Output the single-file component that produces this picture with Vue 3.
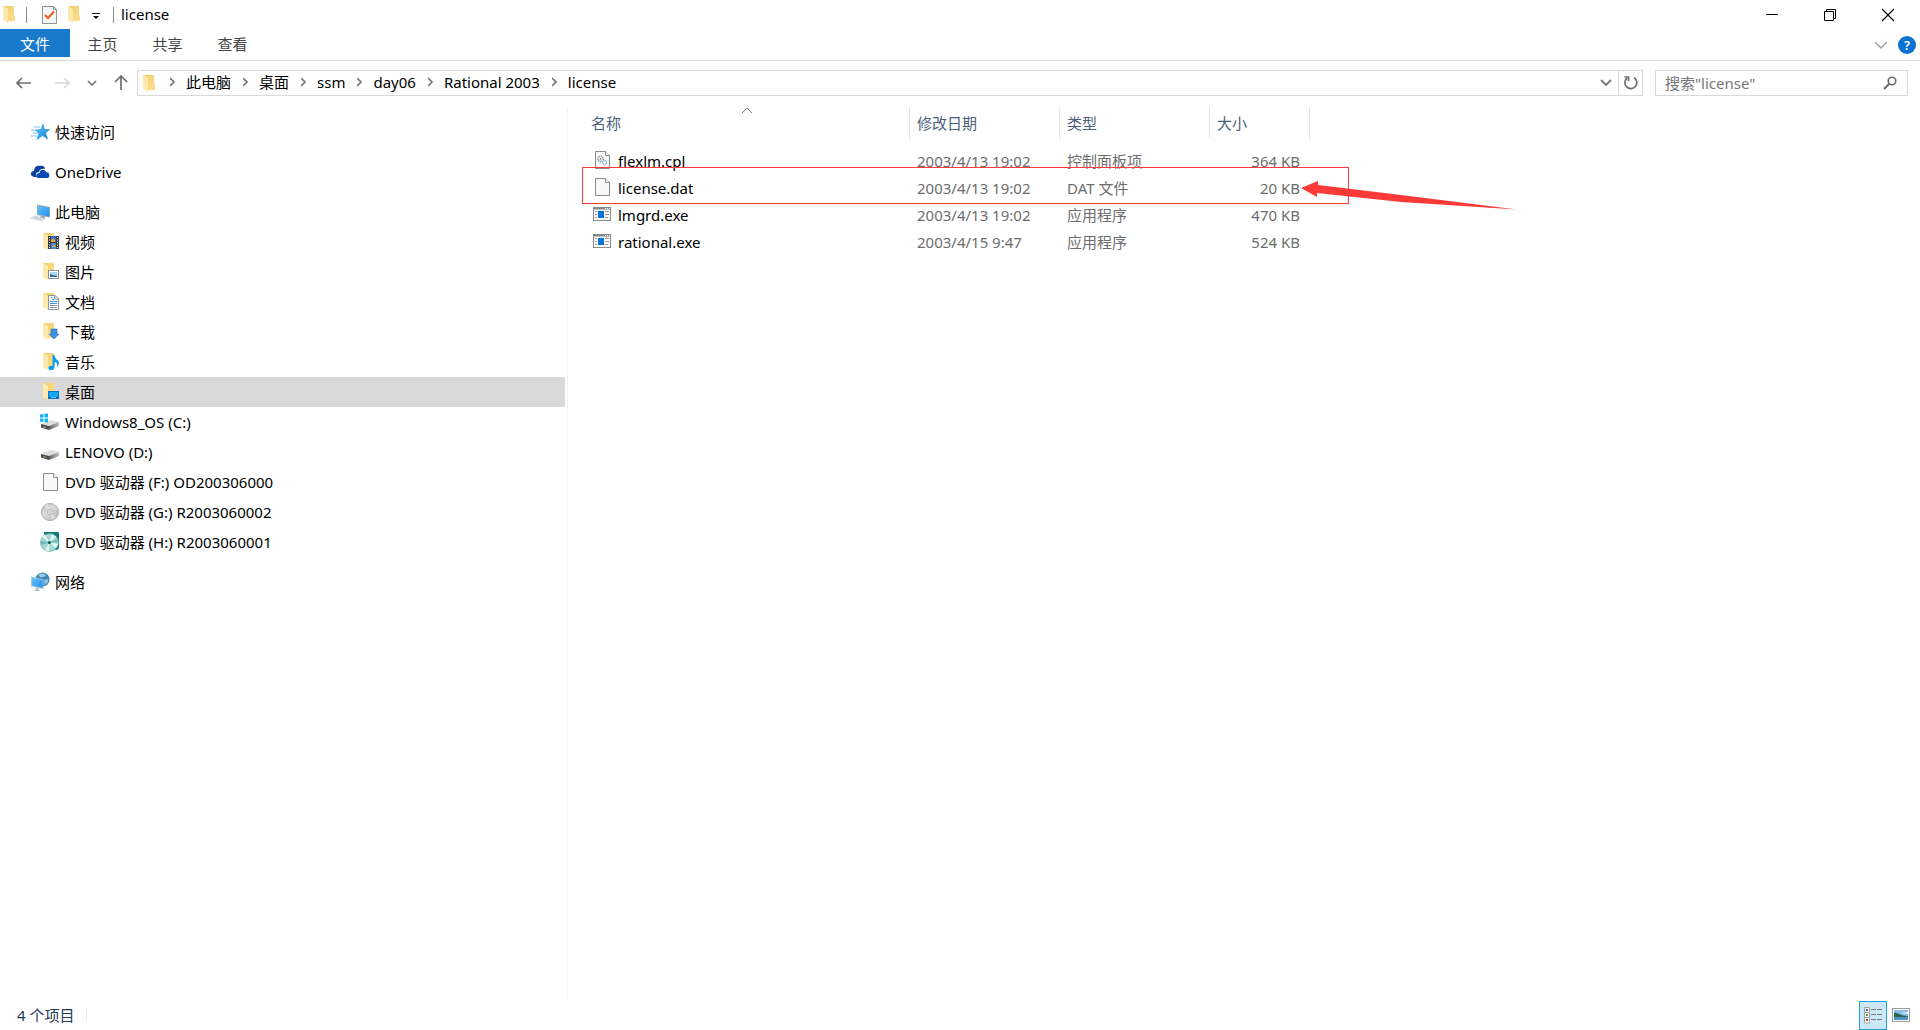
<script setup>
const tabs = ['主页', '共享', '查看']
const crumbs = ['此电脑', '桌面', 'ssm', 'day06', 'Rational 2003', 'license']

const groups = [
  { label: '快速访问', icon: 'star', children: [] },
  { label: 'OneDrive', icon: 'cloud', children: [] },
  {
    label: '此电脑',
    icon: 'pc',
    children: [
      { label: '视频', icon: 'video' },
      { label: '图片', icon: 'picture' },
      { label: '文档', icon: 'document' },
      { label: '下载', icon: 'download' },
      { label: '音乐', icon: 'music' },
      { label: '桌面', icon: 'desktop', selected: true },
      { label: 'Windows8_OS (C:)', icon: 'drive-os' },
      { label: 'LENOVO (D:)', icon: 'drive' },
      { label: 'DVD 驱动器 (F:) OD200306000', icon: 'page' },
      { label: 'DVD 驱动器 (G:) R2003060002', icon: 'disc' },
      { label: 'DVD 驱动器 (H:) R2003060001', icon: 'disc-teal' }
    ]
  },
  { label: '网络', icon: 'network', children: [] }
]

const files = [
  { name: 'flexlm.cpl', date: '2003/4/13 19:02', type: '控制面板项', size: '364 KB', icon: 'cpl' },
  { name: 'license.dat', date: '2003/4/13 19:02', type: 'DAT 文件', size: '20 KB', icon: 'page' },
  { name: 'lmgrd.exe', date: '2003/4/13 19:02', type: '应用程序', size: '470 KB', icon: 'exe' },
  { name: 'rational.exe', date: '2003/4/15 9:47', type: '应用程序', size: '524 KB', icon: 'exe' }
]
</script>

<template>
  <div class="window">
    <svg class="sprite" aria-hidden="true">
      <defs>
        <linearGradient id="gFolder" x1="0" y1="0" x2="1" y2="1">
          <stop offset="0" stop-color="#f3cf6b" />
          <stop offset="1" stop-color="#fbdf8f" />
        </linearGradient>
        <linearGradient id="gScreen" x1="0" y1="0" x2="1" y2="1">
          <stop offset="0" stop-color="#6bc1fb" />
          <stop offset="1" stop-color="#1f93ec" />
        </linearGradient>
        <linearGradient id="gStar" x1="0" y1="0" x2="1" y2="1">
          <stop offset="0" stop-color="#5cc6fb" />
          <stop offset="1" stop-color="#0f86d6" />
        </linearGradient>
        <linearGradient id="gDrive" x1="0" y1="0" x2="1" y2="0">
          <stop offset="0" stop-color="#5c5c5c" />
          <stop offset="1" stop-color="#c4c4c6" />
        </linearGradient>
        <linearGradient id="gDisc" x1="0" y1="0" x2="1" y2="1">
          <stop offset="0" stop-color="#b9b9b9" />
          <stop offset="0.4" stop-color="#dadada" />
          <stop offset="0.6" stop-color="#cfcfcf" />
          <stop offset="1" stop-color="#b0b0b0" />
        </linearGradient>
      </defs>
      <symbol id="folder" viewBox="0 0 12 17">
        <path d="M0 0H11V9L12 10V15H4Z" fill="url(#gFolder)" />
        <path d="M0 0L5 3V17L0 14Z" fill="#fde9ac" />
      </symbol>
      <symbol id="star" viewBox="0 0 20 20">
        <path d="M4 5H10M1 8H7M3 11H8M1 14H7" stroke="#7cc9f7" stroke-width="1" />
        <path d="M13 2L14.500 7.500H19.500L15.500 11L17.500 17L12.500 13.500L7 17.500L9 11.500L5.500 8L11 7.500Z" fill="url(#gStar)" stroke="#1a8fdd" stroke-width="0.6" />
      </symbol>
      <symbol id="cloud" viewBox="0 0 20 20">
        <path d="M2 14C0 12 1 9 4 9C4 5 7 3 10 4C13 3 15 5 15 7C12 6 9 8 9 10C6 10 5 13 7 15H4Z" fill="#0b3f9c" />
        <path d="M8 16C5 15 6 11 9.500 11C10 7 15 7 16 10C19 10 20 13 19 15L18 16Z" fill="#0a4bb5" />
      </symbol>
      <symbol id="pc" viewBox="0 0 20 20">
        <path d="M11 13L15 14V17L10 16Z" fill="#9ea8af" />
        <path d="M7 2.500L20 5V15.500L7 13Z" fill="#8fa9ba" />
        <path d="M7.800 3.500L19.200 5.700V14.400L7.800 12.200Z" fill="url(#gScreen)" />
        <path d="M5 14L15 16.500L12 19L1 16Z" fill="#e1e4e6" stroke="#bfc5c9" stroke-width="0.6" />
        <path d="M4 15.200L12.500 17.500" stroke="#b3babf" stroke-width="0.6" />
      </symbol>
      <symbol id="video" viewBox="0 0 20 20">
        <use href="#folder" x="3" y="1" width="12" height="17" />
        <rect x="8" y="4" width="11" height="13" fill="#3d3d3d" />
        <rect x="11" y="4" width="5" height="6" fill="#2d6fd0" />
        <rect x="11" y="11" width="5" height="6" fill="#3c8ae0" />
        <path d="M11 8L13 6L15 8V10H11ZM12 15L14 12L16 15Z" fill="#e8a33a" />
        <path d="M9.500 5V17M17.500 5V17" stroke="#fff" stroke-width="1" stroke-dasharray="1 1.500" />
      </symbol>
      <symbol id="picture" viewBox="0 0 20 20">
        <use href="#folder" x="3" y="1" width="12" height="17" />
        <rect x="8.500" y="8.500" width="10" height="8" fill="#fff" stroke="#8d9499" />
        <rect x="10" y="10" width="7" height="5" fill="#a9d5f7" />
        <path d="M10 12L13 13L17 14V15H10Z" fill="#2f6d8f" />
      </symbol>
      <symbol id="document" viewBox="0 0 20 20">
        <use href="#folder" x="3" y="1" width="12" height="17" />
        <path d="M8.500 3.500H15L18.500 6.500V17.500H8.500Z" fill="#fff" stroke="#8d9499" />
        <path d="M14.500 3.500V7H18.500" fill="none" stroke="#8d9499" />
        <path d="M10 9.500H17M10 11.500H17M12 7.500H14M11 5.500H13" stroke="#3a9be0" />
        <path d="M10 13.500H17M10 15.500H17" stroke="#8094a5" />
      </symbol>
      <symbol id="download" viewBox="0 0 20 20">
        <use href="#folder" x="3" y="1" width="12" height="17" />
        <path d="M11 7H17V12H19L14 17L9 12H11Z" fill="#3b8ee0" stroke="#2472bf" stroke-width="0.6" />
      </symbol>
      <symbol id="music" viewBox="0 0 20 20">
        <use href="#folder" x="3" y="1" width="12" height="17" />
        <path d="M12.500 3H14.500C14.500 7 19 8 19 11C19 13 18 14 17 15C18 11 16 10 14.500 10V15C14.500 17.500 12.500 18 11 18C8.500 18 8 16 9 14.500C10 13.500 11.500 13.500 12.500 14Z" fill="#0a9cf5" />
      </symbol>
      <symbol id="desktop" viewBox="0 0 20 20">
        <use href="#folder" x="3" y="1" width="12" height="17" />
        <rect x="8.500" y="9.500" width="10" height="7" fill="#17a5f8" stroke="#0b76c4" />
        <path d="M9 15.500H18" stroke="#0a5a9c" />
        <path d="M11 15.500H16" stroke="#5fc4ff" />
      </symbol>
      <symbol id="drive" viewBox="0 0 20 20">
        <path d="M1 12L11 8L19 10L9 14Z" fill="#dedee0" />
        <path d="M1 12L9 14V18L1 15.500Z" fill="#4a4a4a" />
        <path d="M9 14L19 10V14L9 18Z" fill="url(#gDrive)" />
        <rect x="3" y="14.500" width="3" height="1" fill="#7fbf6a" />
      </symbol>
      <symbol id="drive-os" viewBox="0 0 20 20">
        <use href="#drive" x="0" y="0" width="20" height="20" />
        <path d="M0 2.500L3.500 2V5.500H0ZM4.500 1.800L8 1.500V5.500H4.500ZM0 6.500H3.500V10L0 9.500ZM4.500 6.500H8V10.500L4.500 10.200Z" fill="#12b4f2" />
      </symbol>
      <symbol id="page" viewBox="0 0 20 20">
        <path d="M3.500 1.500H13.500L17.500 5.500V18.500H3.500Z" fill="#f8f8f8" stroke="#8b8b8b" />
        <path d="M13.500 1.500V5.500H17.500" fill="#fff" stroke="#8b8b8b" />
      </symbol>
      <symbol id="disc" viewBox="0 0 20 20">
        <circle cx="10" cy="10" r="8.600" fill="url(#gDisc)" stroke="#a4a4a4" stroke-width="0.8" />
        <path d="M10 10L4 4.500L8 2ZM10 10L16 15.500L12 18Z" fill="#f2f2f2" opacity="0.5" />
        <circle cx="10" cy="10" r="2.800" fill="#dedede" stroke="#b0b0b0" stroke-width="0.7" />
        <circle cx="10" cy="10" r="1" fill="#fff" stroke="#999" stroke-width="0.5" />
      </symbol>
      <symbol id="disc-teal" viewBox="0 0 20 20">
        <path d="M4 0H18L19 1V16L17 18H5Z" fill="#0c7c76" />
        <circle cx="9.500" cy="10.500" r="9" fill="#a3d8d5" stroke="#5a9f9b" stroke-width="0.6" />
        <path d="M9.500 10.500L2 5L5 2.500ZM9.500 10.500L12 2L16 4.500ZM9.500 10.500L18 12L16 16ZM9.500 10.500L9 19.500L5 18Z" fill="#e6f5f4" />
        <path d="M9.500 10.500L1 9V13ZM9.500 10.500L17 7L18 10Z" fill="#6bbfba" />
        <circle cx="9.500" cy="10.500" r="1.600" fill="#0b5e5a" />
      </symbol>
      <symbol id="network" viewBox="0 0 20 20">
        <circle cx="12.500" cy="7.500" r="7" fill="#3f86b8" />
        <path d="M8 3C10 1 14 1 16 3C15 5 12 6 10 5ZM14 8L18 7L18 10L15 13Z" fill="#8ec8e6" />
        <path d="M1 4.500L13.500 7.500V17L1 14.500Z" fill="#a9cbe0" />
        <path d="M1.800 5.500L12.700 8.200V16L1.800 13.600Z" fill="url(#gScreen)" />
        <path d="M6 15.500L9 16.300V18L11 19H4L6 17.500Z" fill="#b6c2ca" />
      </symbol>
      <symbol id="cpl" viewBox="0 0 20 20">
        <use href="#page" x="0" y="0" width="20" height="20" />
        <circle cx="8.500" cy="9" r="2.700" fill="#fff" stroke="#8b949b" stroke-width="1.600" stroke-dasharray="1.200 0.600" />
        <circle cx="8.500" cy="9" r="1" fill="#8b949b" />
        <circle cx="12.500" cy="12.500" r="2" fill="#fff" stroke="#6fb1dc" stroke-width="1.400" stroke-dasharray="1 0.500" />
      </symbol>
      <symbol id="exe" viewBox="0 0 20 20">
        <rect x="1.500" y="3.500" width="17" height="13" fill="#fafafa" stroke="#8b8b8b" />
        <path d="M1 4.500H19" stroke="#84878a" stroke-width="2" />
        <path d="M13 4.500H14M15 4.500H16M17 4.500H18" stroke="#fff" />
        <rect x="6" y="7" width="6" height="7" fill="#0a74d6" />
        <path d="M3 7.500H5M3 10.500H5M3 13.500H5M13 7.500H17M13 10.500H17M13 13.500H16" stroke="#9a9a9a" />
      </symbol>
    </svg>

    <header class="titlebar">
      <svg class="folder" viewBox="0 0 12 17"><use href="#folder" /></svg>
      <span class="rule"></span>
      <button class="plain check" aria-label="属性">
        <svg width="16" height="18" viewBox="0 0 16 18">
          <path d="M0.500 0.500H11.500L14.500 3.500V17.500H0.500Z" fill="#f5f6f8" stroke="#8e9196" />
          <path d="M11.500 0.500V3.500H14.500" fill="none" stroke="#8e9196" />
          <path d="M3 9L6 12L12 5.500" fill="none" stroke="#ee5a1c" stroke-width="2" />
        </svg>
      </button>
      <button class="plain" aria-label="新建文件夹">
        <svg class="folder" viewBox="0 0 12 17"><use href="#folder" /></svg>
      </button>
      <button class="plain more" aria-label="自定义快速访问工具栏">
        <svg width="8" height="6" viewBox="0 0 8 6"><path d="M0 0H8V1H0ZM1 3H7L4 6Z" fill="#111" /></svg>
      </button>
      <span class="rule"></span>
      <h1>license</h1>
      <div class="controls">
        <button class="plain" aria-label="最小化">
          <svg width="14" height="14" viewBox="0 0 14 14"><path d="M1 6.500H13" stroke="#000" /></svg>
        </button>
        <button class="plain" aria-label="还原">
          <svg width="14" height="14" viewBox="0 0 14 14">
            <path d="M1.500 3.500H10.500V12.500H1.500ZM3.500 3V1.500H12.500V10.500H11" fill="none" stroke="#000" />
          </svg>
        </button>
        <button class="plain" aria-label="关闭">
          <svg width="14" height="14" viewBox="0 0 14 14"><path d="M1 1L13 13M13 1L1 13" stroke="#000" stroke-width="1.200" /></svg>
        </button>
      </div>
    </header>

    <nav class="ribbon">
      <button class="tab file">文件</button>
      <button v-for="tab in tabs" :key="tab" class="tab">{{ tab }}</button>
      <div class="ribbon-end">
        <button class="plain" aria-label="展开功能区">
          <svg width="14" height="8" viewBox="0 0 14 8"><path d="M1 1L7 7L13 1" fill="none" stroke="#9b9b9b" stroke-width="1.300" /></svg>
        </button>
        <button class="help" aria-label="帮助">?</button>
      </div>
    </nav>

    <div class="navbar">
      <div class="arrows">
        <button class="plain" aria-label="后退">
          <svg width="16" height="12" viewBox="0 0 16 12"><path d="M6 1L1 6L6 11M1 6H15" fill="none" stroke="#6e6e6e" stroke-width="1.700" /></svg>
        </button>
        <button class="plain" aria-label="前进">
          <svg width="16" height="12" viewBox="0 0 16 12"><path d="M10 1L15 6L10 11M15 6H1" fill="none" stroke="#d9d9d9" stroke-width="1.700" /></svg>
        </button>
        <button class="plain recent" aria-label="最近浏览的位置">
          <svg width="10" height="6" viewBox="0 0 10 6"><path d="M1 1L5 5L9 1" fill="none" stroke="#777" stroke-width="1.700" /></svg>
        </button>
        <button class="plain up" aria-label="上移">
          <svg width="14" height="16" viewBox="0 0 14 16"><path d="M1 7L7 1L13 7M7 1V15" fill="none" stroke="#6e6e6e" stroke-width="1.700" /></svg>
        </button>
      </div>
      <div class="address">
        <svg class="folder" viewBox="0 0 12 17"><use href="#folder" /></svg>
        <ol class="crumbs">
          <li v-for="crumb in crumbs" :key="crumb">
            <svg width="5" height="10" viewBox="0 0 5 10"><path d="M0 1L4 5L0 9" fill="none" stroke="#777" stroke-width="1.600" /></svg>
            <a href="#">{{ crumb }}</a>
          </li>
        </ol>
        <button class="plain history" aria-label="以前的位置">
          <svg width="12" height="8" viewBox="0 0 12 8"><path d="M1 1L6 6L11 1" fill="none" stroke="#777" stroke-width="1.900" /></svg>
        </button>
        <button class="plain refresh" aria-label="刷新">
          <svg width="16" height="16" viewBox="0 0 16 16">
            <path d="M11 2.500A6 6 0 1 1 4 3" fill="none" stroke="#6e6e6e" stroke-width="1.700" />
            <path d="M1.500 2H5.500V6" fill="none" stroke="#6e6e6e" stroke-width="1.700" />
          </svg>
        </button>
      </div>
      <form class="search" @submit.prevent>
        <input type="search" placeholder='搜索"license"' aria-label='搜索"license"' />
        <button class="plain" aria-label="搜索">
          <svg width="14" height="14" viewBox="0 0 14 14">
            <circle cx="9" cy="5" r="3.800" fill="none" stroke="#6a6a6a" stroke-width="1.600" />
            <path d="M6.500 7.500L1 13" stroke="#6a6a6a" stroke-width="2" />
          </svg>
        </button>
      </form>
    </div>

    <div class="body">
      <aside class="tree">
        <ul v-for="group in groups" :key="group.label">
          <li>
            <a href="#" class="node">
              <svg class="icon"><use :href="'#' + group.icon" /></svg>{{ group.label }}
            </a>
          </li>
          <li v-for="item in group.children" :key="item.label">
            <a href="#" class="node child" :class="{ selected: item.selected }">
              <svg class="icon"><use :href="'#' + item.icon" /></svg>{{ item.label }}
            </a>
          </li>
        </ul>
      </aside>

      <main class="content">
        <table>
          <colgroup>
            <col class="c-name" /><col class="c-mid" /><col class="c-mid" /><col class="c-size" />
          </colgroup>
          <thead>
            <tr>
              <th>
                名称
                <svg class="sort" width="12" height="7" viewBox="0 0 12 7"><path d="M1 6L6 1L11 6" fill="none" stroke="#777" /></svg>
              </th>
              <th>修改日期</th>
              <th>类型</th>
              <th>大小</th>
            </tr>
          </thead>
          <tbody>
            <tr v-for="file in files" :key="file.name">
              <td><span class="name"><svg class="icon"><use :href="'#' + file.icon" /></svg>{{ file.name }}</span></td>
              <td>{{ file.date }}</td>
              <td>{{ file.type }}</td>
              <td>{{ file.size }}</td>
            </tr>
          </tbody>
        </table>
        <div class="mark"></div>
        <svg class="pointer" width="216" height="32" viewBox="0 0 216 32">
          <path d="M0 8L17 1V5L100 15L216 29.500L100 22L16 13V17Z" fill="#fd3a38" />
        </svg>
      </main>
    </div>

    <footer class="status">
      <span class="count">4 个项目</span>
      <div class="views">
        <button class="view active" aria-label="详细信息">
          <svg width="18" height="17" viewBox="0 0 18 17">
            <path d="M0.500 0.500H5.500V5.500H0.500ZM0.500 5.500H5.500V10.500H0.500ZM0.500 10.500H5.500V16H0.500Z" fill="#fff" stroke="#a0a0a0" />
            <path d="M2 3H4" stroke="#2a7fd0" stroke-width="2" />
            <path d="M2 8H4" stroke="#5f9148" stroke-width="2" />
            <path d="M2 13H4" stroke="#c23a22" stroke-width="2" />
            <path d="M7 2.500H12M13 2.500H18M7 7.500H12M13 7.500H18M7 12.500H12M13 12.500H18" stroke="#777" />
          </svg>
        </button>
        <button class="view" aria-label="大缩略图">
          <svg width="18" height="14" viewBox="0 0 18 14">
            <rect x="0.500" y="0.500" width="17" height="13" fill="#fff" stroke="#9c9c9c" />
            <rect x="2" y="2" width="14" height="10" fill="#8fbcec" />
            <path d="M2 5C5 4 8 8 16 8V9H2Z" fill="#2c6653" />
            <path d="M2 9H16V12H2Z" fill="#4e94c8" />
            <path d="M9 5L16 4V6Z" fill="#e7f1fb" />
          </svg>
        </button>
      </div>
    </footer>
  </div>
</template>

<style>
body {
  margin: 0;
  background: #fff;
}
</style>

<style scoped>
.window {
  display: flex;
  flex-direction: column;
  min-height: 100vh;
  background: #fff;
  color: #000;
  font-family: "Noto Sans", "Noto Sans CJK SC", sans-serif;
  font-size: 15px;
  line-height: 20px;
}
.sprite {
  position: absolute;
  width: 0;
  height: 0;
}
button,
input {
  font: inherit;
  color: inherit;
}
.plain {
  display: flex;
  align-items: center;
  justify-content: center;
  padding: 0;
  border: 0;
  background: none;
}
a {
  color: inherit;
  text-decoration: none;
}
ul,
ol {
  margin: 0;
  padding: 0;
  list-style: none;
}
.folder {
  flex: none;
  width: 12px;
  height: 17px;
}
.icon {
  flex: none;
  width: 20px;
  height: 20px;
}

.titlebar {
  display: flex;
  align-items: center;
  height: 29px;
  padding-left: 3px;
}
.rule {
  width: 1px;
  height: 16px;
  margin-left: 11px;
  background: #8c8c8c;
}
.check {
  margin: 0 10px 0 15px;
}
.more {
  margin: 2px 0 0 12px;
}
.more + .rule {
  margin-left: 13px;
}
h1 {
  margin: 0 0 0 7px;
  padding-bottom: 2px;
  font-size: 15px;
  font-weight: 400;
}
.controls {
  display: flex;
  margin: 0 3px 0 auto;
}
.controls .plain {
  width: 58px;
  height: 28px;
}

.ribbon {
  display: flex;
  height: 31px;
  border-bottom: 1px solid #dadbdc;
}
.tab {
  width: 65px;
  height: 28px;
  padding: 2px 0 0;
  border: 0;
  background: none;
  color: #444;
}
.file {
  width: 70px;
  background: #1979ca;
  color: #fff;
}
.ribbon-end {
  display: flex;
  align-items: center;
  gap: 10px;
  margin: 0 4px 0 auto;
}
.help {
  width: 18px;
  height: 18px;
  padding: 0;
  border: 0;
  border-radius: 50%;
  background: #0a72d1;
  color: #fff;
  font-size: 13px;
  font-weight: 600;
  line-height: 18px;
}

.navbar {
  display: flex;
  align-items: center;
  gap: 12px;
  padding: 9px 12px 11px 16px;
}
.arrows {
  display: flex;
  align-items: center;
  gap: 22px;
  width: 109px;
}
.recent {
  margin-left: -5px;
}
.up {
  margin-left: -5px;
}
.address,
.search {
  display: flex;
  align-items: center;
  box-sizing: border-box;
  height: 26px;
  border: 1px solid #d9d9d9;
}
.address {
  flex: 1;
  padding-left: 5px;
}
.crumbs {
  display: flex;
  flex: 1;
  padding: 0 0 2px 3px;
}
.crumbs li {
  display: flex;
  align-items: center;
  gap: 11px;
  padding-left: 12px;
}
.history {
  width: 24px;
}
.refresh {
  width: 24px;
  height: 24px;
  border-left: 1px solid #d9d9d9;
}
.search {
  width: 253px;
  padding: 0 10px 0 9px;
}
.search input {
  flex: 1;
  min-width: 0;
  padding: 0;
  border: 0;
  outline: 0;
  background: none;
}
.search input::placeholder {
  color: #767676;
  opacity: 1;
}

.body {
  display: flex;
  flex: 1;
}
.tree {
  display: flex;
  flex: none;
  flex-direction: column;
  gap: 10px;
  box-sizing: border-box;
  width: 568px;
  padding: 10px 2px 0 0;
  border-right: 1px solid #f3f3f3;
}
.node {
  display: flex;
  align-items: center;
  gap: 5px;
  height: 30px;
  padding-left: 30px;
}
.child {
  padding-left: 40px;
}
.selected {
  background: #d9d9d9;
}

.content {
  position: relative;
  flex: 1;
}
table {
  table-layout: fixed;
  width: 742px;
  border-collapse: separate;
  border-spacing: 0;
}
.c-name {
  width: 342px;
}
.c-mid {
  width: 150px;
}
.c-size {
  width: 100px;
}
th,
td {
  padding: 0 10px 0 7px;
  text-align: left;
  font-weight: 400;
  white-space: nowrap;
}
th {
  position: relative;
  height: 32px;
  border-right: 1px solid #e5e5e5;
  color: #4c607a;
}
th:first-child {
  padding-left: 23px;
}
.sort {
  position: absolute;
  top: 0;
  left: 173px;
}
thead::after {
  content: "";
  display: block;
  height: 8px;
}
td {
  height: 27px;
  color: #6d6d6d;
}
td:first-child {
  padding-left: 25px;
  color: #000;
}
td:last-child {
  text-align: right;
}
.name {
  display: flex;
  align-items: center;
  gap: 5px;
}
.name .icon {
  margin: 0 1px 2px -1px;
}
.mark {
  position: absolute;
  top: 60px;
  left: 14px;
  box-sizing: border-box;
  width: 767px;
  height: 37px;
  border: 1px solid #fd3a38;
}
.pointer {
  position: absolute;
  top: 73px;
  left: 733px;
}

.status {
  display: flex;
  align-items: center;
  justify-content: space-between;
  height: 30px;
  padding: 0 6px 0 17px;
  color: #1e395b;
}
.count {
  padding-right: 12px;
  border-right: 1px solid #ececec;
  line-height: 14px;
}
.views {
  display: flex;
}
.view {
  display: flex;
  align-items: center;
  justify-content: center;
  width: 27px;
  height: 29px;
  padding: 0;
  border: 0;
  background: none;
}
.active {
  width: 28px;
  border: 1px solid #26a0da;
  background: #cbe8f6;
}
</style>
